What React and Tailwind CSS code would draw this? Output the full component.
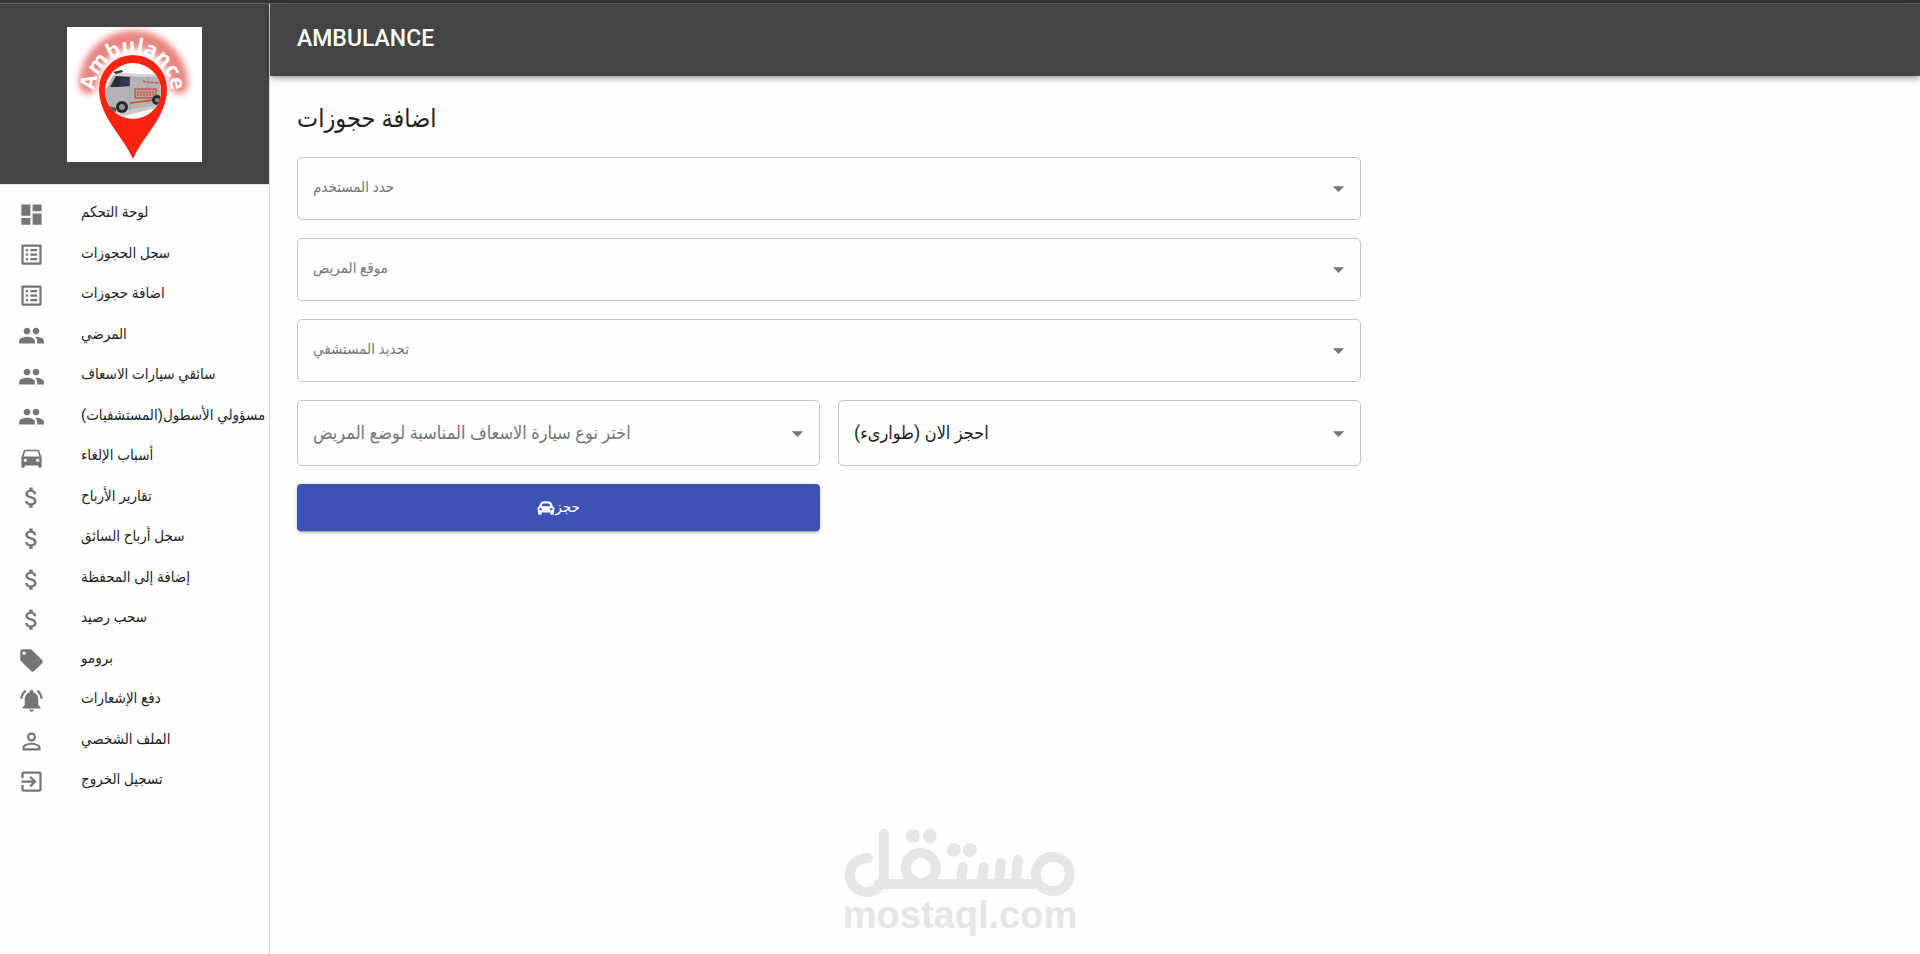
import {
  MdArrowDropDown,
  MdAttachMoney,
  MdDashboard,
  MdDirectionsCar,
  MdExitToApp,
  MdListAlt,
  MdLocalOffer,
  MdNotificationsActive,
  MdPeople,
  MdPersonOutline,
} from "react-icons/md";
import { FaCarAlt } from "react-icons/fa";

const menu = [
  { title: "لوحة التحكم", icon: MdDashboard },
  { title: "سجل الحجوزات", icon: MdListAlt },
  { title: "اضافة حجوزات", icon: MdListAlt },
  { title: "المرضي", icon: MdPeople },
  { title: "سائقي سيارات الاسعاف", icon: MdPeople },
  { title: "مسؤولي الأسطول(المستشفيات)", icon: MdPeople },
  { title: "أسباب الإلغاء", icon: MdDirectionsCar },
  { title: "تقارير الأرباح", icon: MdAttachMoney },
  { title: "سجل أرباح السائق", icon: MdAttachMoney },
  { title: "إضافة إلى المحفظة", icon: MdAttachMoney },
  { title: "سحب رصيد", icon: MdAttachMoney },
  { title: "برومو", icon: MdLocalOffer },
  { title: "دفع الإشعارات", icon: MdNotificationsActive },
  { title: "الملف الشخصي", icon: MdPersonOutline },
  { title: "تسجيل الخروج", icon: MdExitToApp },
];

export default function App() {
  return (
    <div className="flex min-h-screen flex-col bg-[#fefefe] font-['Roboto','DejaVu_Sans_Condensed','DejaVu_Sans',sans-serif] text-[#1f1f1f]">
      <div className="h-1 border-b border-[#5f6063] bg-[#35363a]" />
      <div className="flex flex-1">
        <Sidebar />
        <div className="flex min-w-0 flex-1 flex-col">
          <header className="flex h-[72px] items-center bg-[#444] px-[27px] pb-0.5 shadow-[0_2px_4px_-1px_rgba(0,0,0,0.2),0_4px_5px_0_rgba(0,0,0,0.14),0_1px_10px_0_rgba(0,0,0,0.12)]">
            <h1 className="text-[23px] font-medium text-white">AMBULANCE</h1>
          </header>
          <BookingForm />
        </div>
      </div>
      <Watermark />
    </div>
  );
}

function Sidebar() {
  return (
    <aside className="w-[270px] shrink-0 border-r border-[#e0e0e0]">
      <div className="flex h-[180px] justify-center bg-[#444] pt-[23px]">
        <Logo />
      </div>
      <nav className="border-t border-[#e0e0e0] py-[9px]">
        <ul className="grid h-[608px] auto-rows-fr">
          {menu.map(({ title, icon: Icon }) => (
            <li key={title}>
              <a href="#" className="flex h-full items-center pl-[18px] text-[15px] whitespace-nowrap">
                <Icon className="mr-9 size-[27px] shrink-0 text-[#757575]" />
                <span className="pb-1">{title}</span>
              </a>
            </li>
          ))}
        </ul>
      </nav>
    </aside>
  );
}

function BookingForm() {
  return (
    <main className="px-[27px] pt-[25px]">
      <h2 className="mb-5 text-[25px] leading-9">اضافة حجوزات</h2>
      <form className="grid w-2/3 grid-cols-2 gap-[18px]">
        <Dropdown className="col-span-2 h-[63px] text-[15px] text-[#757575]" label="حدد المستخدم" />
        <Dropdown className="col-span-2 h-[63px] text-[15px] text-[#757575]" label="موقع المريض" />
        <Dropdown className="col-span-2 h-[63px] text-[15px] text-[#757575]" label="تحديد المستشفي" />
        <Dropdown className="h-[66px] text-[18px] text-[#757575]" label="اختر نوع سيارة الاسعاف المناسبة لوضع المريض" />
        <Dropdown className="h-[66px] text-[18px]" label="احجز الان (طوارىء)" />
        <button
          type="button"
          className="flex h-[47px] items-center justify-center rounded bg-[#3f51b5] text-[15px] text-white shadow-[0_3px_1px_-2px_rgba(0,0,0,0.2),0_2px_2px_0_rgba(0,0,0,0.14),0_1px_5px_0_rgba(0,0,0,0.12)]"
        >
          <FaCarAlt className="size-[18px]" />
          <span>حجز</span>
        </button>
      </form>
    </main>
  );
}

function Dropdown({ label, className }) {
  return (
    <div className={`relative ${className}`}>
      <select
        aria-label={label}
        className="size-full appearance-none rounded-[5px] border border-[#c4c4c4] bg-transparent px-[15px] pb-0.5 outline-none"
      >
        <option>{label}</option>
      </select>
      <MdArrowDropDown className="pointer-events-none absolute inset-y-0 right-[9px] my-auto size-[27px] text-[#757575]" />
    </div>
  );
}

function Logo() {
  return (
    <svg viewBox="0 0 135 135" className="size-[135px] bg-white">
      <defs>
        <path id="arc" d="M28 72V64a38 38 0 0 1 76 0v8" />
        <clipPath id="lens">
          <circle cx="66" cy="64" r="28" />
        </clipPath>
        <filter id="glow" x="-30%" y="-30%" width="160%" height="160%">
          <feGaussianBlur stdDeviation="3" />
        </filter>
      </defs>
      <path d="M21 58a45 45 0 0 1 91 0" fill="none" stroke="#d9241c" strokeWidth="18" strokeLinecap="round" opacity="0.55" filter="url(#glow)" />
      <text fill="#fff" fontFamily="Open Sans" fontWeight="700" fontSize="21" textAnchor="middle">
        <textPath href="#arc" startOffset="50%">Ambulance</textPath>
      </text>
      <path d="M66 132C57 110 32 90 32 62a34 34 0 0 1 68 0c0 28-25 48-34 70Z" fill="#fa2312" />
      <circle cx="66" cy="64" r="28" fill="#fff" />
      <Van />
    </svg>
  );
}

function Van() {
  return (
    <g clipPath="url(#lens)">
      <path d="M46 84l46-8 6 3-42 10z" fill="#c9c9c9" />
      <path d="M37 66l8-16 5-4 43 2 4 6v20l-6 4-32 5-16 1-6-4z" fill="#b4b4b8" />
      <path d="M50 46l43 2v2l-44-1z" fill="#d6d6d8" />
      <path d="M46 45l9-2 1 2-7 2z" fill="#333" />
      <path d="M43 60l6-11 14 1v9l-12 1z" fill="#2b2e36" />
      <path d="M54 51h8v7l-9 1z" fill="#30385c" />
      <path d="M63 50v33M81 50v27" stroke="#98989c" strokeWidth="0.6" />
      <path d="M76 54l3 1 14 1" fill="none" stroke="#d8543f" strokeWidth="1.6" strokeDasharray="3 1" />
      <rect x="68" y="62" width="21" height="9" fill="#b9a19d" stroke="#cf442c" strokeWidth="1.2" />
      <path d="M71 64v5M74 64v5M77 64v5M80 64v5M83 64v5M86 64v5" stroke="#cf442c" />
      <path d="M63 76l32-4" stroke="#d8482f" strokeWidth="1.6" />
      <path d="M39 78l10 3v4l-9-2z" fill="#55565a" />
      <circle cx="55" cy="80" r="6" fill="#26272a" />
      <circle cx="55" cy="80" r="3" fill="#8e8f93" />
      <circle cx="90" cy="73" r="5" fill="#26272a" />
      <circle cx="90" cy="73" r="2" fill="#8e8f93" />
    </g>
  );
}

function Watermark() {
  return (
    <div className="pointer-events-none absolute bottom-[21px] left-1/2 -translate-x-1/2 text-[#e6e6e6]">
      <svg viewBox="0 0 230 68" className="mx-auto h-[68px] w-[230px]" fill="none" stroke="currentColor" strokeWidth="10" strokeLinecap="round">
        <path d="M23 29a17 17 0 1 0 16 17V5M34 55h160" />
        <circle cx="208" cy="45" r="17" />
        <circle cx="76" cy="39" r="15" />
        <path d="M116 54l2-16M137 54l2-16M154 54l2-20M171 54l2-23" />
        <g fill="currentColor" stroke="none">
          <circle cx="68" cy="7" r="7" />
          <circle cx="85" cy="7" r="7" />
          <circle cx="109" cy="21" r="7" />
          <circle cx="125" cy="21" r="7" />
        </g>
      </svg>
      <p className="text-center font-['Liberation_Sans',sans-serif] text-[38px] leading-9 font-bold">mostaql.com</p>
    </div>
  );
}
